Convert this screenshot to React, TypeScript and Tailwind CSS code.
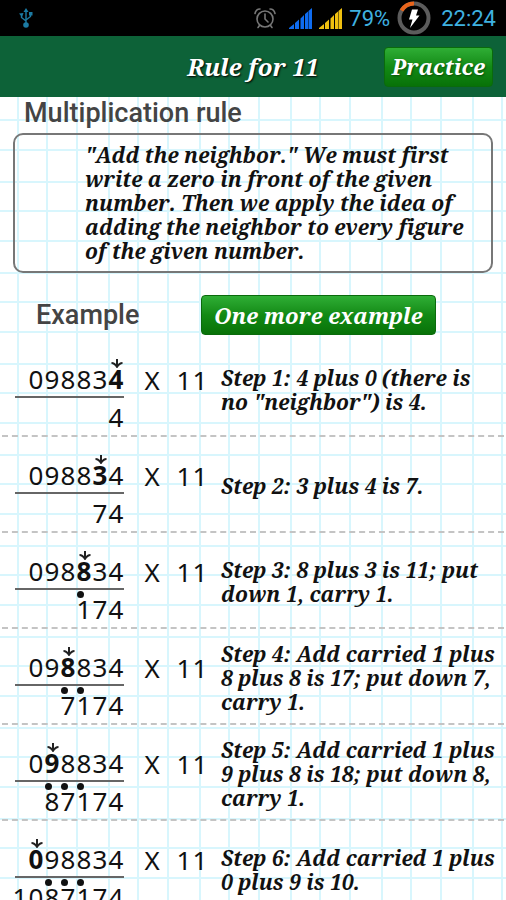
type Step = {
  active: number;
  answer: string;
  carries: number[];
  text: string;
};

const NUMBER = '098834';

const steps: Step[] = [
  { active: 5, answer: '4', carries: [], text: 'Step 1: 4 plus 0 (there is no "neighbor") is 4.' },
  { active: 4, answer: '74', carries: [], text: 'Step 2: 3 plus 4 is 7.' },
  { active: 3, answer: '174', carries: [0], text: 'Step 3: 8 plus 3 is 11; put down 1, carry 1.' },
  { active: 2, answer: '7174', carries: [0, 1], text: 'Step 4: Add carried 1 plus 8 plus 8 is 17; put down 7, carry 1.' },
  { active: 1, answer: '87174', carries: [0, 1, 2], text: 'Step 5: Add carried 1 plus 9 plus 8 is 18; put down 8, carry 1.' },
  { active: 0, answer: '1087174', carries: [2, 3, 4], text: 'Step 6: Add carried 1 plus 0 plus 9 is 10.' },
];

const serif =
  "font-['Droid_Serif','Noto_Serif','DejaVu_Serif_Condensed','DejaVu_Serif',serif] font-bold italic [font-kerning:none] [font-variant-ligatures:none]";

const heading = 'font-[Roboto,sans-serif] text-[27px] leading-8 font-medium text-[#444]';

const greenButton = 'h-10 rounded-sm border border-[#0a6a0c] bg-linear-to-b from-[#2fae35] via-[#128a14] to-[#087208] text-[22px] text-white';

// squared paper: three lines per 91px tile in each direction
const paper =
  'bg-[linear-gradient(90deg,#d8f6fd_0_2px,transparent_2px_29px,#d8f6fd_29px_31px,transparent_31px_59px,#d8f6fd_59px_61px,transparent_61px),linear-gradient(180deg,#d8f6fd_0_2px,transparent_2px_29px,#d8f6fd_29px_31px,transparent_31px_59px,#d8f6fd_59px_61px,transparent_61px)] bg-size-[91px_91px] bg-position-[17px_84px]';

function UsbIcon() {
  return (
    <svg viewBox="0 0 14 20" className="ml-[3px] h-5 w-3.5" fill="none" stroke="#1c7ba3" strokeWidth="1.4">
      <path d="M7 3V16M7 13L2.500 9.500V6.500M7 12L11.500 8.500V6" />
      <path d="M4.500 4L7 0L9.500 4ZM0 5.500L4.500 5L3 9ZM10 4H13.500V7.500H10Z" fill="#1c7ba3" stroke="none" />
      <circle cx="7" cy="17" r="2.800" fill="#1c7ba3" stroke="none" />
    </svg>
  );
}

function AlarmIcon() {
  return (
    <svg viewBox="0 0 24 24" className="h-6 w-6" fill="none" stroke="#777" strokeWidth="1.6" strokeLinecap="round">
      <circle cx="12" cy="13" r="8" />
      <path d="M12 8v5l3 3" />
      <path d="M2 7.500C2.500 5 4.500 3 7 3M22 7.500C21.500 5 19.500 3 17 3" />
      <path d="M6.500 19.500L5 21.500M17.500 19.500L19 21.500" />
    </svg>
  );
}

function SignalIcon({ color }: { color: string }) {
  return (
    <svg viewBox="0 0 23 21" className="h-[21px] w-[23px]" fill={color}>
      <path d="M0 21V20L5 16V21ZM6 21V15L10 11.500V21ZM11.500 21V10.500L15 7V21ZM16 21V6L19 3.500V21ZM19.500 21V3L23 0V21Z" />
    </svg>
  );
}

function BatteryIcon() {
  return (
    <svg viewBox="0 0 34 34" className="h-[34px] w-[34px]" fill="none">
      <circle cx="17" cy="17" r="14.500" stroke="#5c5c5c" strokeWidth="4" />
      <path d="M4.500 9.500A14.500 14.500 0 0 1 17 2.500" stroke="#e8641b" strokeWidth="4" />
      <path d="M15 8.500H21L19 14.500H22.500L13 27L15.500 18.500H12Z" fill="#fff" />
    </svg>
  );
}

function ArrowDown() {
  return (
    <svg viewBox="0 0 12 9" className="absolute -top-0.5 left-[3px] h-[9px] w-3" fill="none" stroke="#222">
      <path d="M6 0V8" strokeWidth="2" />
      <path d="M0.500 4C2.500 4 4.500 5.500 6 8C7.500 5.500 9.500 4 11.500 4" strokeWidth="1.800" />
    </svg>
  );
}

function StatusBar() {
  return (
    <div className="flex h-9 shrink-0 items-center justify-between bg-black pr-2.5 pl-4 font-[Roboto,sans-serif] text-[22px] text-[#3fb2e0]">
      <UsbIcon />
      <div className="flex items-center">
        <AlarmIcon />
        <div className="ml-3 flex gap-[7px]">
          <SignalIcon color="#0f6cf0" />
          <SignalIcon color="#f0c010" />
        </div>
        <span className="ml-[7px]">79%</span>
        <span className="mr-2.5 ml-[7px]">
          <BatteryIcon />
        </span>
        <span>22:24</span>
      </div>
    </div>
  );
}

function Sum({ step }: { step: Step }) {
  return (
    <div className="flex w-[109px] shrink-0 flex-col">
      <div className="flex h-9 items-center justify-end border-b-2 border-[#666]">
        {NUMBER.split('').map((digit, i) => (
          <span key={i} className={i === step.active ? 'relative w-4 text-center font-bold' : 'w-4 text-center'}>
            {digit}
            {i === step.active && <ArrowDown />}
          </span>
        ))}
      </div>
      <div className="flex h-10 items-center justify-end">
        {step.answer.split('').map((digit, i) => (
          <span key={i} className="relative w-4 shrink-0 text-center">
            {digit}
            {step.carries.includes(i) && <span className="absolute top-0 left-px h-[7px] w-[7px] rounded-full bg-[#111]" />}
          </span>
        ))}
      </div>
    </div>
  );
}

export default function App() {
  return (
    <div className="flex h-screen flex-col overflow-hidden bg-white text-[#111]">
      <StatusBar />
      <header className={`${serif} grid h-[61px] shrink-0 grid-cols-[1fr_auto_1fr] items-center bg-[#0d6238] px-[13px] text-2xl text-white`}>
        <h1 className="col-start-2 [text-shadow:1px_1px_2px_#000]">Rule for 11</h1>
        <button className={`${greenButton} justify-self-end px-[7px] [text-shadow:1px_1px_2px_#0006]`}>Practice</button>
      </header>

      <main className={`${paper} grow overflow-y-auto [scrollbar-width:none]`}>
        <h2 className={`${heading} px-6`}>Multiplication rule</h2>
        <p className={`${serif} mx-[13px] mt-1 rounded-[10px] border-2 border-[#777] py-2 pr-5 pl-[70px] text-[21px] leading-6`}>
          "Add the neighbor." We must first write a zero in front of the given number. Then we apply the idea of adding the
          neighbor to every figure of the given number.
        </p>

        <div className="mt-[22px] flex items-center pl-9">
          <h2 className={`${heading} w-[165px]`}>Example</h2>
          <button className={`${serif} ${greenButton} px-3`}>One more example</button>
        </div>

        <ol className="mx-0.5 mt-1.5">
          {steps.map((step, i) => (
            <li key={i} className="flex h-24 border-b-2 border-dashed border-[#c4c4c4] pr-1 pl-[13px]">
              <div className="flex pt-[21px] font-['Noto_Sans',sans-serif] text-[26px] leading-9">
                <Sum step={step} />
                <div className="flex w-[97px] pl-5">
                  <span className="mr-4 w-4 text-center">X</span>
                  <span className="w-4 text-center">1</span>
                  <span className="w-4 text-center">1</span>
                </div>
              </div>
              <p className={`${serif} self-center pt-1 text-[21px] leading-6`}>{step.text}</p>
            </li>
          ))}
        </ol>
      </main>
    </div>
  );
}
